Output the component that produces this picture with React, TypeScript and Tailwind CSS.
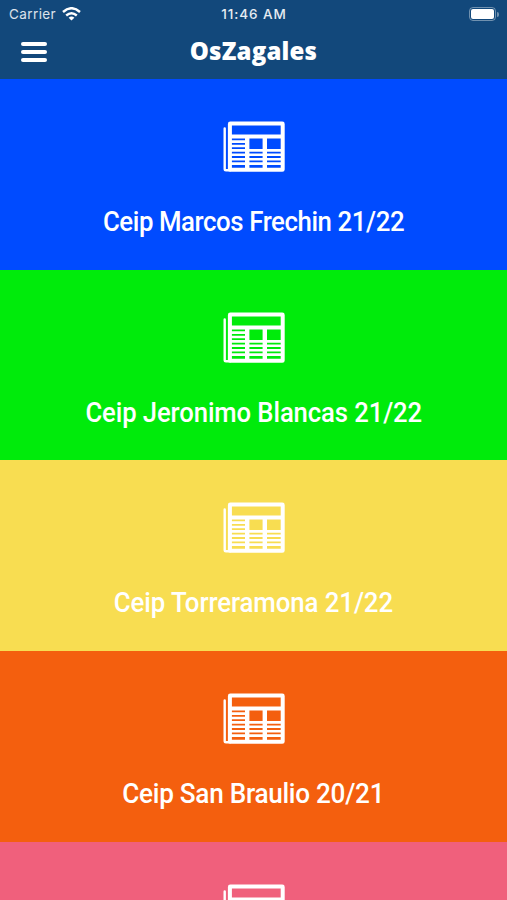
import React from 'react';

const sections = [
  { title: 'Ceip Marcos Frechin 21/22', color: 'bg-[#004bff]', fit: 'scale-x-[0.921] tracking-[-0.45px]' },
  { title: 'Ceip Jeronimo Blancas 21/22', color: 'bg-[#00eb0b]', fit: 'scale-x-[0.916] tracking-[-0.1px]' },
  { title: 'Ceip Torreramona 21/22', color: 'bg-[#f8dd51]', fit: 'scale-x-[0.922] tracking-[-0.1px]' },
  { title: 'Ceip San Braulio 20/21', color: 'bg-[#f45f0e]', fit: 'scale-x-[0.934] tracking-[-0.3px]' },
  { title: '', color: 'bg-[#f0607c]', fit: '' },
];

const NewspaperIcon: React.FC = () => (
  <svg className="w-[62px] h-[51px] shrink-0" viewBox="0 0 62 51" fill="none" stroke="white">
    {/* Folded page behind */}
    <path d="M1.7 7.5V48Q1.7 49.3 3 49.3H7" strokeWidth="2.4" strokeLinecap="round" />
    {/* Front page */}
    <rect x="6.9" y="2.5" width="52.8" height="46.3" rx="0.4" strokeWidth="4" />
    <path d="M8 15.6H59" strokeWidth="4" />
    <path d="M24.2 16V48M41.8 16V48" strokeWidth="4.4" />
    <path d="M8 20.6H23M8 25H23" strokeWidth="2.6" />
    <path d="M8 29.4H59M8 33.8H59M8 38.2H59M8 42.6H59" strokeWidth="2.6" />
  </svg>
);

const App: React.FC = () => {
  return (
    <div className="w-full h-screen overflow-hidden bg-[#12487b] text-white font-['Roboto',sans-serif]">
      <header className="h-[79px]">
        <div className="h-7 pl-[9px] pr-2 grid grid-cols-3 items-center text-[13.5px]">
          <div className="flex items-center gap-1.5 tracking-[0.4px] text-white/85 font-['Inter',sans-serif]">
            Carrier
            <svg className="w-[19px] h-[14px]" viewBox="0 0 19 14" fill="none" stroke="white" strokeWidth="2.4">
              <path d="M1 5Q9.5 -2.6 18 5M4.2 8.5Q9.5 3.8 14.8 8.5" />
              <path d="M6.6 10.8Q9.5 8.4 12.4 10.8L9.5 13.6Z" fill="white" stroke="none" />
            </svg>
          </div>
          <div className="text-center font-medium tracking-[0.9px] text-white/90 font-['Inter',sans-serif]">11:46 AM</div>
          <div className="flex justify-end items-center gap-px">
            <div className="w-[27px] h-[14px] rounded-[4px] border border-white/40 p-px">
              <div className="w-full h-full rounded-[2px] bg-white" />
            </div>
            <div className="w-[2px] h-[5px] rounded-r-full bg-white/40" />
          </div>
        </div>
        <div className="h-12 px-[21px] grid grid-cols-[1fr_auto_1fr] items-center">
          <button className="w-[26px] flex flex-col gap-1" aria-label="Menu">
            <span className="w-full h-1 rounded-full bg-white" />
            <span className="w-full h-1 rounded-full bg-white" />
            <span className="w-full h-1 rounded-full bg-white" />
          </button>
          <h1 className="pb-0.5 text-[24px] leading-none tracking-[0.2px] font-extrabold font-['Open_Sans',sans-serif]">
            OsZagales
          </h1>
        </div>
      </header>
      <main>
        {sections.map((section, i) => (
          <section key={i} className={`h-[190.7px] pt-[42px] flex flex-col items-center ${section.color}`}>
            <NewspaperIcon />
            <h2 className={`mt-[33px] text-[28px] leading-[33px] font-medium whitespace-nowrap ${section.fit}`}>
              {section.title}
            </h2>
          </section>
        ))}
      </main>
    </div>
  );
};

export default App;
